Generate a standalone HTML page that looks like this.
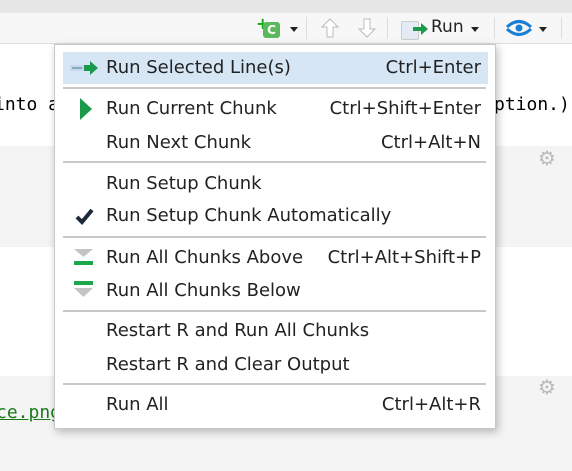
<!DOCTYPE html><html><head><style>
body{margin:0;width:572px;height:471px;overflow:hidden;background:#fff;font-family:"DejaVu Sans","Liberation Sans",sans-serif;position:relative}
.a{position:absolute}
.mono{font-family:"DejaVu Sans Mono","Liberation Mono",monospace;font-size:18px;color:#000}
.menu{position:absolute;left:54px;top:44px;width:440px;height:383px;background:#fff;border:1px solid #c8c8c8;box-shadow:2px 3px 8px rgba(0,0,0,.25)}
.it{position:absolute;left:8px;width:425px;height:32px;font-size:18px;color:#222;line-height:32px}
.it span.l{position:absolute;left:43px}
.it span.r{position:absolute;right:7px}
.sep{position:absolute;left:8px;width:423px;height:0;border-top:2px solid #c8c8c8}
</style></head><body>
<div class="a" style="left:0;top:0;width:572px;height:13px;background:#e6e6e6"></div>
<div class="a" style="left:0;top:13px;width:572px;height:30px;background:#f7f7f7;border-bottom:1px solid #ddd"></div>
<div class="a" style="left:256px;top:18px;width:12px;height:12px;color:#1a1;font-weight:bold;font-size:16px;line-height:12px">+</div>
<div class="a" style="left:263px;top:22px;width:17px;height:16px;background:#5cb85c;border-radius:3px;color:#fff;font-size:12px;font-weight:bold;text-align:center;line-height:16px">C</div>
<div class="a" style="left:290px;top:27px;border:4px solid transparent;border-top:5px solid #222"></div>
<div class="a" style="left:306px;top:17px;width:1px;height:22px;background:#ddd"></div>
<svg class="a" style="left:320px;top:17px" width="20" height="22"><path d="M10 2 L18 10 H13 V20 H7 V10 H2 Z" fill="#fff" stroke="#bbb"/></svg>
<svg class="a" style="left:357px;top:17px" width="20" height="22"><path d="M10 20 L18 12 H13 V2 H7 V12 H2 Z" fill="#fff" stroke="#bbb"/></svg>
<div class="a" style="left:387px;top:17px;width:1px;height:22px;background:#ddd"></div>
<div class="a" style="left:401px;top:21px;width:16px;height:17px;background:#e4ebf5;border:1px solid #ccc;border-radius:2px"></div>
<svg class="a" style="left:413px;top:22px" width="16" height="14"><path d="M0 5h8V1l7 6-7 6V9H0z" fill="#1a9a4a"/></svg>
<div class="a" style="left:431px;top:17px;font-size:17px;color:#222">Run</div>
<div class="a" style="left:471px;top:27px;border:4px solid transparent;border-top:5px solid #222"></div>
<div class="a" style="left:494px;top:17px;width:1px;height:22px;background:#ddd"></div>
<svg class="a" style="left:505px;top:18px" width="28" height="20"><path d="M2 9 Q14 -2 26 9" stroke="#1a7fd4" stroke-width="3" fill="none"/><path d="M2 11 Q14 22 26 11" stroke="#1a7fd4" stroke-width="3" fill="none"/><circle cx="14" cy="10" r="3.5" fill="#1a7fd4"/></svg>
<div class="a" style="left:539px;top:27px;border:4px solid transparent;border-top:5px solid #222"></div>
<div class="a" style="left:561px;top:17px;width:1px;height:22px;background:#ddd"></div>
<div class="a mono" style="left:-6px;top:94px">into a</div>
<div class="a mono" style="left:494px;top:94px">ption.)</div>
<div class="a" style="left:0;top:146px;width:572px;height:101px;background:#f4f4f4"></div>
<div class="a" style="left:0;top:376px;width:572px;height:95px;background:#f4f4f4"></div>
<div class="a mono" style="left:-4px;top:402px;color:#1a7a1a;text-decoration:underline">ce.png</div>
<div class="a" style="left:538px;top:146px;font-size:20px;color:#bbb">⚙</div>
<div class="a" style="left:538px;top:375px;font-size:20px;color:#bbb">⚙</div>
<div class="menu">
<div class="it" style="top:7px;background:#d6e6f5"><span class="l">Run Selected Line(s)</span><span class="r">Ctrl+Enter</span></div>
<svg class="a" style="left:15px;top:15px" width="30" height="16"><rect x="0" y="5" width="16" height="6" fill="#c5d8f0"/><rect x="2" y="7" width="10" height="2" fill="#8ab"/><path d="M14 5h6V1l8 7-8 7v-4h-6z" fill="#1a9a4a"/></svg>
<div class="sep" style="top:42px"></div>
<div class="it" style="top:48px"><span class="l">Run Current Chunk</span><span class="r">Ctrl+Shift+Enter</span></div>
<svg class="a" style="left:24px;top:52px" width="14" height="24"><path d="M1 1 L13 12 L1 23Z" fill="#1a9a4a"/></svg>
<div class="it" style="top:82px"><span class="l">Run Next Chunk</span><span class="r">Ctrl+Alt+N</span></div>
<div class="sep" style="top:116px"></div>
<div class="it" style="top:123px"><span class="l">Run Setup Chunk</span></div>
<div class="it" style="top:155px"><span class="l">Run Setup Chunk Automatically</span></div>
<svg class="a" style="left:20px;top:162px" width="20" height="18"><path d="M2 10 L7 15 L17 3" stroke="#1e2a38" stroke-width="4" fill="none"/></svg>
<div class="sep" style="top:191px"></div>
<div class="it" style="top:197px"><span class="l">Run All Chunks Above</span><span class="r">Ctrl+Alt+Shift+P</span></div>
<svg class="a" style="left:18px;top:203px" width="22" height="20"><path d="M1 1h19l-9.5 8z" fill="#c4c4c4"/><rect x="1" y="13" width="19" height="4" fill="#1aa84a"/></svg>
<div class="it" style="top:230px"><span class="l">Run All Chunks Below</span></div>
<svg class="a" style="left:18px;top:235px" width="22" height="20"><rect x="1" y="1" width="19" height="4" fill="#1aa84a"/><path d="M1 8h19l-9.5 9z" fill="#c4c4c4"/></svg>
<div class="sep" style="top:265px"></div>
<div class="it" style="top:270px"><span class="l">Restart R and Run All Chunks</span></div>
<div class="it" style="top:304px"><span class="l">Restart R and Clear Output</span></div>
<div class="sep" style="top:338px"></div>
<div class="it" style="top:344px"><span class="l">Run All</span><span class="r">Ctrl+Alt+R</span></div>
</div>
</body></html>
